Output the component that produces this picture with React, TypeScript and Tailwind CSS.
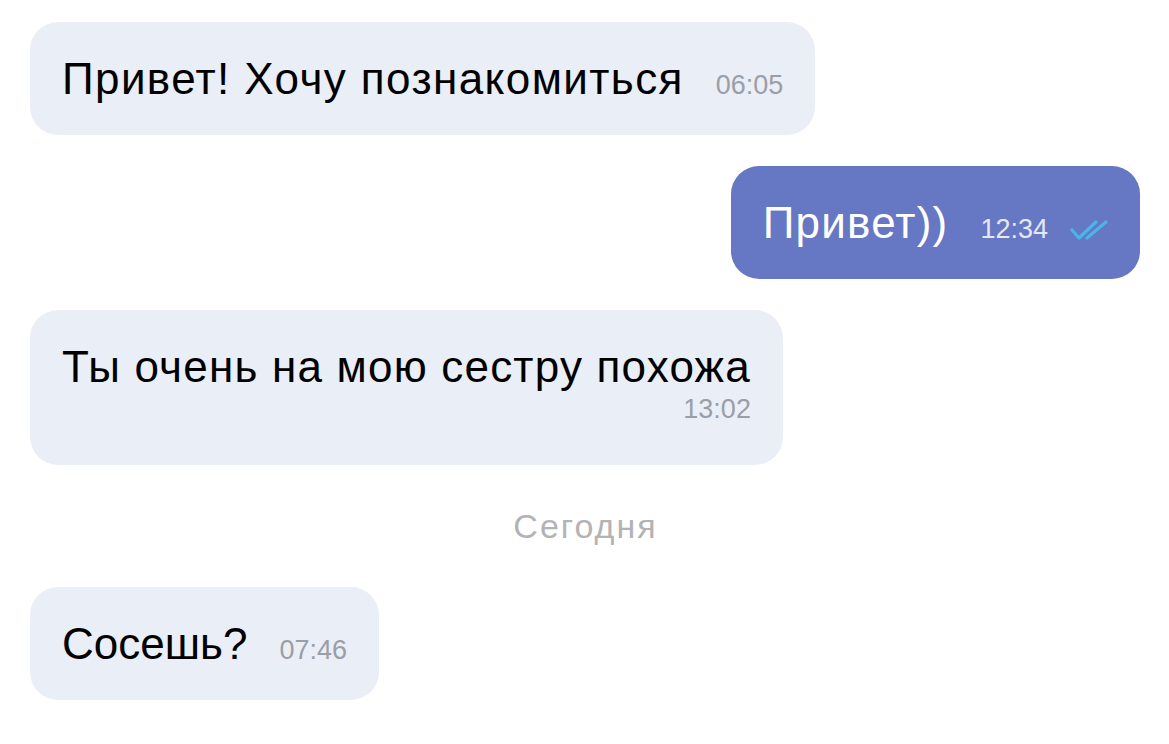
const font = { fontFamily: '"Liberation Sans", Arial, sans-serif' };

function Checks() {
  return (
    <svg width="38" height="22" viewBox="0 0 38 22" fill="none" className="ml-[22px] self-start mt-[22px]">
      <path d="M2 11l7 8L26 3" stroke="#49b6ea" strokeWidth="3.2" strokeLinecap="round" strokeLinejoin="round" />
      <path d="M17 19L36 3" stroke="#49b6ea" strokeWidth="3.2" strokeLinecap="round" />
    </svg>
  );
}

function Incoming({ text, time, track }: { text: string; time: string; track: string }) {
  return (
    <div className="flex">
      <div className="flex items-baseline rounded-[28px] bg-[#eaeef7] pl-8 pr-8 h-[113px] pt-[31px]">
        <span className={`text-[44px] leading-[52px] text-black ${track}`}>{text}</span>
        <span className="ml-[32px] text-[27px] text-[#9b9ea6]">{time}</span>
      </div>
    </div>
  );
}

export default function App() {
  return (
    <div className="min-h-screen bg-white pl-[30px] pr-[29px] pt-[22px]" style={font}>
      <div className="flex flex-col gap-[31px]">
        <Incoming text="Привет! Хочу познакомиться" time="06:05" track="tracking-[1.4px]" />

        <div className="flex justify-end">
          <div className="flex items-baseline rounded-[28px] bg-[#6677c3] pl-8 pr-8 h-[113px] pt-[31px]">
            <span className="text-[44px] leading-[52px] text-white tracking-[1.2px]">Привет))</span>
            <span className="ml-[32px] text-[27px] text-[#e4e8f7]">12:34</span>
            <Checks />
          </div>
        </div>

        <div className="flex">
          <div className="flex flex-col rounded-[28px] bg-[#eaeef7] pl-8 pr-8 pt-[31px] h-[155px]">
            <span className="text-[44px] leading-[52px] text-black tracking-[1.2px]">Ты очень на мою сестру похожа</span>
            <span className="self-end text-[27px] leading-[32px] text-[#9b9ea6]">13:02</span>
          </div>
        </div>
      </div>

      <div className="text-center text-[34px] leading-[40px] tracking-[2px] text-[#b3b3b5] mt-[41px] mb-[41px] pl-[1px]">Сегодня</div>

      <Incoming text="Сосешь?" time="07:46" track="tracking-0" />
    </div>
  );
}
